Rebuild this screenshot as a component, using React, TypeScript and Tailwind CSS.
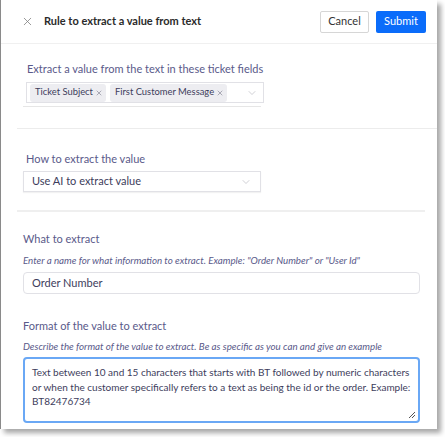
import { X, ChevronDown } from 'lucide-react';

const font = { fontFamily: 'Lato, "Noto Sans", Arial, sans-serif' };

function Chip({ label }: { label: string }) {
    return (
        <span className="flex items-center gap-[2px] bg-[#ededf1] rounded-[3px] pl-[5px] pr-[3px] h-[18px] text-[9.4px] text-[#3d3d5c] whitespace-nowrap">
            {label}
            <X size={8} strokeWidth={1.6} className="text-[#6b6b80]" />
        </span>
    );
}

export default function App() {
    return (
        <div className="w-[445px] h-[437px] bg-white overflow-hidden" style={font}>
            <div className="flex flex-col w-[437px] h-[429px] bg-white border-l border-[#8a8a8a] shadow-[4px_4px_5px_rgba(0,0,0,0.35)]">
                {/* header */}
                <div className="flex items-center h-[44px] border-b border-[#f0f0f0] pl-[20px] pr-[11px]">
                    <X size={13} strokeWidth={1.4} className="text-[#7a7a7a]" />
                    <span className="ml-[10px] text-[11px] font-bold text-[#2b2b2b]">Rule to extract a value from text</span>
                    <div className="ml-auto flex gap-[7px]">
                        <button className="h-[22px] w-[49px] border border-[#d6d6d6] rounded-[2px] text-[11px] text-[#333] bg-white">Cancel</button>
                        <button className="h-[22px] w-[50px] rounded-[2px] text-[11px] text-white bg-[#0a6cfa]">Submit</button>
                    </div>
                </div>

                {/* section 1 */}
                <div className="ml-[16px] pl-[6px] pt-[16px] h-[85px] border-b border-[#ececec]">
                    <div className="ml-[4px] text-[11px] text-[#5a5a8a] leading-[18px]">Extract a value from the text in these ticket fields</div>
                    <div className="mt-[4px] w-[238px] ml-[3px] h-[21px] flex items-center gap-[4px] border border-[#e1e1e6] px-[3px]">
                        <Chip label="Ticket Subject" />
                        <Chip label="First Customer Message" />
                        <ChevronDown size={12} strokeWidth={1.2} className="ml-auto mr-[2px] text-[#b0b0b8]" />
                    </div>
                    <div className="mt-[3px] w-[238px] border-b border-[#e6e6e6]" />
                </div>

                {/* section 2 */}
                <div className="ml-[16px] pl-[6px] pt-[21px] h-[83px] border-b-2 border-[#efefef] mr-[12px]">
                    <div className="ml-[3px] text-[11px] text-[#5a5a8a] leading-[18px]">How to extract the value</div>
                    <div className="mt-[3px] w-[238px] h-[21px] flex items-center border border-[#e1e1e6] px-[8px] text-[11px] text-[#3d3d5c] shadow-[0_1px_1px_rgba(0,0,0,0.05)]">
                        Use AI to extract value
                        <ChevronDown size={12} strokeWidth={1.2} className="ml-auto text-[#b0b0b8]" />
                    </div>
                </div>

                {/* section 3 */}
                <div className="pl-[22px] pr-[17px] pt-[18px]">
                    <div className="text-[11px] text-[#5a5a8a] leading-[18px]">What to extract</div>
                    <div className="mt-[5px] text-[9.75px] italic text-[#5a5a8a] leading-[14px]">Enter a name for what information to extract. Example: "Order Number" or "User Id"</div>
                    <div className="mt-[5px] h-[22px] flex items-center border border-[#e1e1e6] rounded-[4px] px-[8px] text-[11px] text-[#3d3d5c]">Order Number</div>
                </div>

                {/* section 4 */}
                <div className="pl-[22px] pr-[17px] pt-[23px]">
                    <div className="text-[11px] text-[#5a5a8a] leading-[18px]">Format of the value to extract</div>
                    <div className="mt-[4px] text-[9.75px] italic text-[#5a5a8a] leading-[14px]">Describe the format of the value to extract. Be as specific as you can and give an example</div>
                    <div className="relative mt-[4px] h-[66px] border-2 border-[#6aa8f5] rounded-[4px] pl-[7px] pr-[4px] pt-[6px] text-[10px] text-[#3d3d5c] leading-[14.5px]">
                        Text between 10 and 15 characters that starts with BT followed by numeric characters or when the customer specifically refers to a text as being the id or the order. Example: BT82476734
                        <svg className="absolute right-[2px] bottom-[2px]" width="8" height="8" viewBox="0 0 8 8">
                            <path d="M7 1 L1 7 M7 4 L4 7" stroke="#555" strokeWidth="1" />
                        </svg>
                    </div>
                </div>
            </div>
        </div>
    );
}
